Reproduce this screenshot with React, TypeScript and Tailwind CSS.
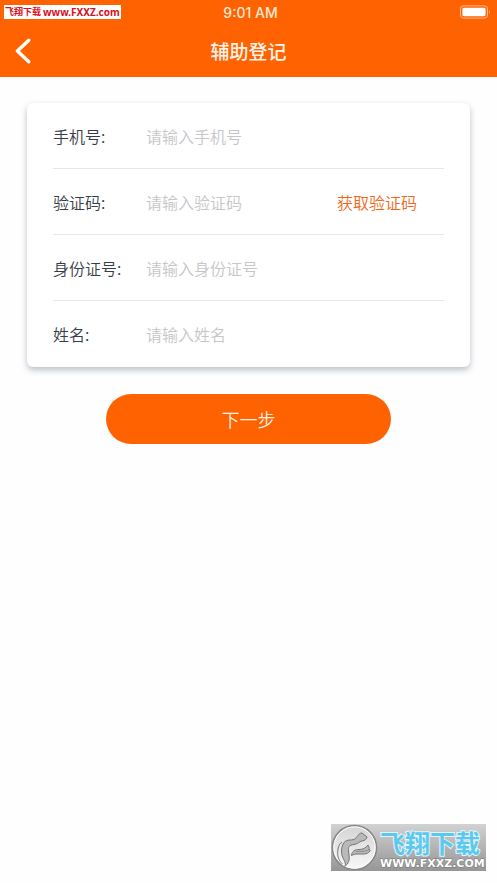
import { useState } from "react";

const fields = [
  { id: "phone", label: "手机号:", placeholder: "请输入手机号", type: "tel" },
  { id: "code", label: "验证码:", placeholder: "请输入验证码", type: "text", action: "获取验证码" },
  { id: "idcard", label: "身份证号:", placeholder: "请输入身份证号", type: "text" },
  { id: "name", label: "姓名:", placeholder: "请输入姓名", type: "text" },
];

function StatusBar() {
  return (
    <div className="relative flex h-6 items-center justify-center">
      <a
        href="#site"
        className="absolute left-1 top-[5px] flex h-[14px] items-center gap-[2px] bg-white px-px font-['Noto_Sans','Noto_Sans_CJK_SC',sans-serif] leading-[14px] font-bold whitespace-nowrap text-[#d8101c]"
      >
        <span className="text-[9px]">飞翔下载</span>
        <span className="text-[10px]">www.FXXZ.com</span>
      </a>
      <span className="pl-1 pt-[2px] font-[Inter,sans-serif] text-sm leading-4 font-medium text-[#ffe9d6]">
        9:01 AM
      </span>
      <svg className="absolute right-[6px] top-[5px]" width="31" height="14" viewBox="0 0 31 14" fill="none">
        <rect x="0.5" y="0.9" width="27" height="12.2" rx="3" stroke="#ffb98a" />
        <rect x="2.4" y="2.8" width="23.2" height="8.4" rx="1.4" fill="#fff" />
        <path d="M29 5.2c1.2.5 1.2 3.1 0 3.6z" fill="#ffb98a" />
      </svg>
    </div>
  );
}

function Header() {
  return (
    <header className="h-[77px] bg-[#ff6200]">
      <StatusBar />
      <div className="relative flex h-[53px] items-center justify-center">
        <button type="button" aria-label="返回" className="absolute left-3 top-3 p-[2px]">
          <svg width="20" height="28" viewBox="0 0 20 28" fill="none">
            <path
              d="M14.8 2.2 3.4 13 14.8 23.8"
              stroke="#fff"
              strokeWidth="3.4"
              strokeLinecap="round"
              strokeLinejoin="round"
            />
          </svg>
        </button>
        <h1 className="text-[19px] leading-6 font-medium text-[#fff4ea]">辅助登记</h1>
      </div>
    </header>
  );
}

function Watermark() {
  return (
    <a
      href="#site"
      className="absolute right-[11px] bottom-3 flex h-[47px] w-[155px] bg-linear-to-b from-[#d2d2d2] to-[#969696]"
    >
      <svg className="shrink-0" width="47" height="47" viewBox="0 0 47 47">
        <defs>
          <linearGradient id="disc" x1="0" y1="0" x2="0" y2="1">
            <stop offset="0" stopColor="#d4d4d4" />
            <stop offset="1" stopColor="#f8f8f8" />
          </linearGradient>
        </defs>
        <circle cx="23.5" cy="23.5" r="22" fill="url(#disc)" stroke="#858585" strokeWidth="1.6" />
        <circle cx="23.5" cy="23.5" r="20.7" fill="none" stroke="#fff" />
        <g fill="#b9b9b9" stroke="#747474" strokeWidth="1" strokeLinejoin="round">
          <path d="M14 42C16 38 10 34 10.500 27C11 19 14 16 19 16C24 16 25 14 27 11.500C28 10 29 9 31 9L36 13C36 15 34 16.500 31 17C28 17.500 27 20 23 20.500C18 21 17 23 17.500 27C18 32 20 38 14 42Z" />
          <path d="M20.500 31.500C21 27 24 25.500 28 25.500C32 25.500 35 24 37 21C38 23 38.500 24 38 25.500C39 25.500 39.500 26 39 27C36 31 31 30 28 30C25 30 23 30 20.500 31.500Z" />
          <path d="M25 28C29 26.500 34 28.500 38 25.500" fill="none" strokeWidth="0.7" />
          <path d="M11.500 40C7 36 6 31 7 25C7.500 22 9 19 11 18" fill="none" />
        </g>
      </svg>
      <span className="flex flex-col items-start pl-[2px] pt-1 font-bold whitespace-nowrap">
        <span className="text-[25px] leading-7 text-[#5cc8ee] [paint-order:stroke_fill] [-webkit-text-stroke:2px_#e2f6fc]">
          飞翔下载
        </span>
        <span className="pt-[2px] font-['DejaVu_Sans',sans-serif] text-[11px] leading-3 text-white [paint-order:stroke_fill] [-webkit-text-stroke:1px_#777]">
          WWW.FXXZ.COM
        </span>
      </span>
    </a>
  );
}

export default function App() {
  const [values, setValues] = useState<Record<string, string>>({});

  return (
    <div className="relative min-h-screen bg-[#fefefe] font-['Noto_Sans_CJK_SC',sans-serif]">
      <Header />

      <form className="px-[27px] pt-[26px]" onSubmit={(e) => e.preventDefault()}>
        <div className="rounded-md bg-white px-[26px] shadow-[0_3px_6px_rgba(60,75,95,0.35)]">
          {fields.map((f) => (
            <div
              key={f.id}
              className="flex h-[66px] items-center border-b border-[#e6e7ec] text-base font-[350] last:border-b-0"
            >
              <label htmlFor={f.id} className="w-[93px] shrink-0 whitespace-nowrap text-[#363d49]">
                {f.label}
              </label>
              <input
                id={f.id}
                type={f.type}
                placeholder={f.placeholder}
                value={values[f.id] ?? ""}
                onChange={(e) => setValues({ ...values, [f.id]: e.target.value })}
                className="h-10 min-w-0 flex-1 bg-transparent outline-none placeholder:text-[#c6c6c9]"
              />
              {f.action && (
                <button type="button" className="mr-[27px] shrink-0 text-[#f0691a]">
                  {f.action}
                </button>
              )}
            </div>
          ))}
        </div>

        <div className="flex justify-center pt-[27px]">
          <button
            type="submit"
            className="h-[50px] w-[285px] rounded-full bg-[#ff6200] text-lg font-[350] text-[#fff0e2]"
          >
            下一步
          </button>
        </div>
      </form>

      <Watermark />
    </div>
  );
}
